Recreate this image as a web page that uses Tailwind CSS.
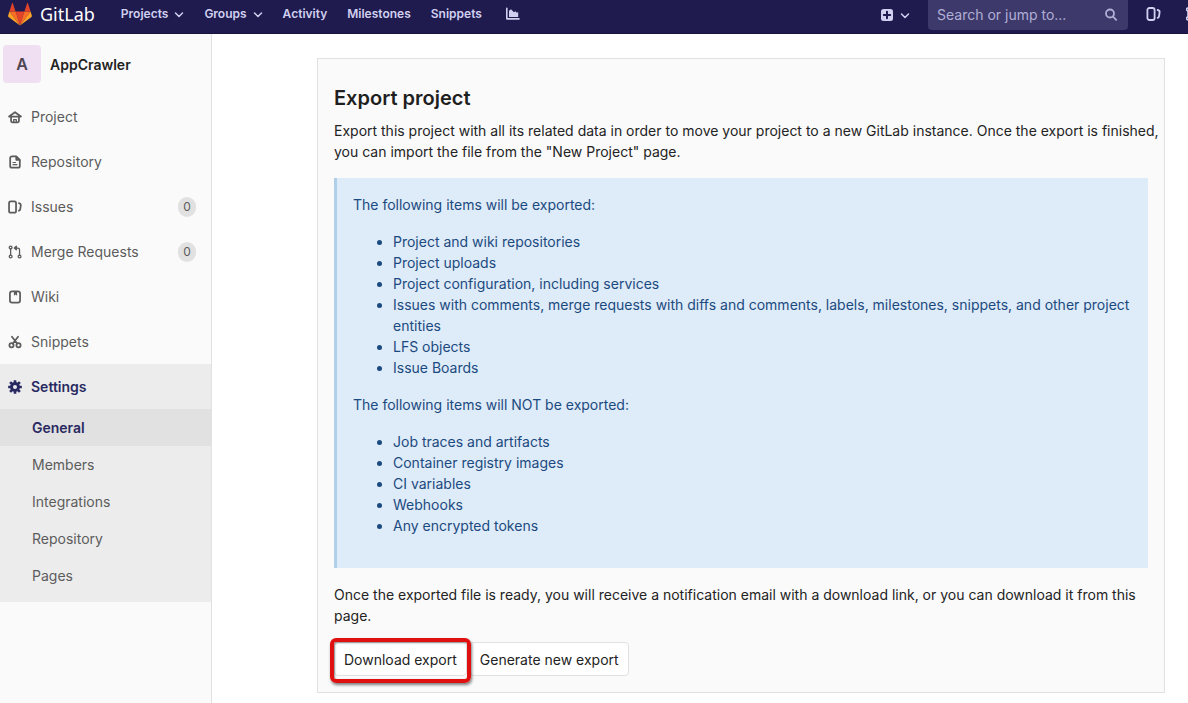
<!DOCTYPE html>
<html lang="en">
<head>
    <meta charset="UTF-8">
    <meta name="viewport" content="width=device-width, initial-scale=1.0">
    <title>General · Settings · AppCrawler · GitLab</title>
    <script src="https://cdn.jsdelivr.net/npm/@tailwindcss/browser@4"></script>
</head>
<body class="min-h-screen flex flex-col bg-white font-['Inter',sans-serif] text-sm leading-[21px] text-[#232323]">
    <header class="h-[34px] shrink-0 flex items-start justify-between overflow-hidden bg-[#1f1b4e] border-b border-[#17143d] text-[#d1d0f0] text-xs font-semibold">
        <nav class="h-7 pl-2 flex items-center gap-5">
            <a href="#" class="flex items-center gap-2 mr-1.5 text-white">
                <svg class="w-6 h-6" viewBox="0 0 24 24">
                    <path fill="#e24329" d="M12 23.5L16.4 9.6H7.6z"/>
                    <path fill="#fc6d26" d="M12 23.5L7.6 9.6H1.4zM12 23.5L16.4 9.6h6.2z"/>
                    <path fill="#fca326" d="M1.4 9.6L.1 13.8c-.1.4 0 .8.4 1.1L12 23.5zM22.6 9.6l1.3 4.2c.1.4 0 .8-.4 1.1L12 23.5z"/>
                    <path fill="#e24329" d="M1.4 9.6h6.2L4.9 1.4c-.1-.4-.7-.4-.9 0zM22.6 9.6h-6.2l2.7-8.2c.1-.4.7-.4.9 0z"/>
                </svg>
                <span class="font-['Noto_Sans',sans-serif] text-lg font-normal">GitLab</span>
            </a>
            <button type="button" class="flex items-center gap-1.5">Projects
                <svg class="w-[10px] h-[10px]" viewBox="0 0 10 10" fill="none" stroke="currentColor" stroke-width="1.5" stroke-linecap="round" stroke-linejoin="round"><path d="M1.5 4L5 7.5 8.5 4"/></svg>
            </button>
            <button type="button" class="flex items-center gap-1.5">Groups
                <svg class="w-[10px] h-[10px]" viewBox="0 0 10 10" fill="none" stroke="currentColor" stroke-width="1.5" stroke-linecap="round" stroke-linejoin="round"><path d="M1.5 4L5 7.5 8.5 4"/></svg>
            </button>
            <a href="#">Activity</a>
            <a href="#">Milestones</a>
            <a href="#">Snippets</a>
            <a href="#" aria-label="Analytics" class="ml-0.5">
                <svg class="w-4 h-4" viewBox="0 0 16 16" fill="currentColor"><path d="M2 2.2a.8.8 0 0 1 1.6 0v9.9h11.3a.8.8 0 0 1 0 1.7H3.2A1.2 1.2 0 0 1 2 12.6z"/><path d="M5 11V4.8l2-1.6 3 3 1.6-1L13 7l1.2-1.4V11z"/></svg>
            </a>
        </nav>
        <div class="flex items-start">
            <button type="button" aria-label="New" class="h-[30px] mr-[18px] flex items-center gap-1.5">
                <svg class="w-[14px] h-[14px]" viewBox="0 0 14 14"><rect x="1" y="1" width="12" height="12" rx="2.5" fill="currentColor"/><path d="M7 3.8v6.4M3.8 7h6.4" stroke="#1f1b4e" stroke-width="2" stroke-linecap="round"/></svg>
                <svg class="w-[10px] h-[10px]" viewBox="0 0 10 10" fill="none" stroke="currentColor" stroke-width="1.5" stroke-linecap="round" stroke-linejoin="round"><path d="M1.5 4L5 7.5 8.5 4"/></svg>
            </button>
            <label class="w-[200px] h-[30px] px-[9px] flex items-center rounded-b bg-[#3d396b]">
                <input type="text" aria-label="Search" placeholder="Search or jump to..." class="min-w-0 flex-1 text-sm font-normal outline-none placeholder:text-[#b1afd6]">
                <svg class="w-4 h-4" viewBox="0 0 16 16" fill="none" stroke="#b1afd6" stroke-width="1.8" stroke-linecap="round"><circle cx="7" cy="6.5" r="4"/><path d="M10 9.7l3.2 3.2"/></svg>
            </label>
            <a href="#" aria-label="Issues" class="h-7 ml-[18px] flex items-center">
                <svg class="w-4 h-4" viewBox="0 0 16 16" fill="none" stroke="currentColor" stroke-width="1.8" stroke-linecap="round"><rect x="1.4" y="2" width="7.2" height="12" rx="2"/><path d="M11.600 4c1.500.3 2.200 1 2 2.300l-.6 4c-.1.8-.6 1.300-1.400 1.500"/></svg>
            </a>
            <a href="#" aria-label="Merge requests" class="w-[2px] h-7 ml-6 flex items-center overflow-hidden">
                <svg class="w-4 h-4 shrink-0" viewBox="0 0 16 16" fill="none" stroke="currentColor" stroke-width="1.6"><circle cx="2" cy="3.5" r="1.4"/><circle cx="2" cy="12.5" r="1.4"/><path d="M2 5v6"/></svg>
            </a>
        </div>
    </header>

    <div class="flex-1 flex">
        <aside class="w-[212px] shrink-0 bg-[#fafafa] border-r border-[#e1e1e1] text-[#5c5c5c]">
            <a href="#" class="h-[60px] pl-[3px] flex items-center gap-[9px] text-[#232323] font-semibold">
                <span class="w-[38px] h-[38px] flex items-center justify-center rounded-sm bg-[#f0def2] text-base text-[#4f4654]">A</span>
                AppCrawler
            </a>
            <ul>
                <li>
                    <a href="#" class="h-[45px] pl-2 pr-[15px] flex items-center gap-[9px]">
                        <svg class="w-[14px] h-[14px]" viewBox="0 0 16 16" fill="none" stroke="currentColor" stroke-width="2" stroke-linecap="round" stroke-linejoin="round"><path d="M1.200 7.500L8 2.500l6.800 5zM3.500 8v4.500a1.500 1.500 0 0 0 1.500 1.500h6a1.500 1.500 0 0 0 1.500-1.500V8"/><path stroke-width="1.500" d="M6.500 13.500v-2.500h3v2.500"/></svg>
                        Project
                    </a>
                </li>
                <li>
                    <a href="#" class="h-[45px] pl-2 pr-[15px] flex items-center gap-[9px]">
                        <svg class="w-[14px] h-[14px]" viewBox="0 0 16 16" fill="none" stroke="currentColor" stroke-width="2" stroke-linecap="round" stroke-linejoin="round"><path d="M9.500 1.500H4.500a2 2 0 0 0-2 2v9a2 2 0 0 0 2 2h7a2 2 0 0 0 2-2V5.500z"/><path fill="currentColor" stroke-width="1" d="M9 1.500V6h4.500z"/><path stroke-width="1.200" d="M5.700 8.500h3M5.700 11h4.600"/></svg>
                        Repository
                    </a>
                </li>
                <li>
                    <a href="#" class="h-[45px] pl-2 pr-[15px] flex items-center gap-[9px]">
                        <svg class="w-[14px] h-[14px]" viewBox="0 0 16 16" fill="none" stroke="currentColor" stroke-width="2" stroke-linecap="round"><rect x="1.200" y="1.500" width="8" height="13" rx="2"/><path d="M12.500 3.500c1.500.300 2.300 1.200 2.100 2.600l-.6 4.300c-.1.900-.6 1.500-1.500 1.800"/></svg>
                        Issues
                        <span class="w-[18px] h-5 ml-auto flex items-center justify-center rounded-full bg-[#e1e1e1] text-xs">0</span>
                    </a>
                </li>
                <li>
                    <a href="#" class="h-[45px] pl-2 pr-[15px] flex items-center gap-[9px]">
                        <svg class="w-[14px] h-[14px]" viewBox="0 0 16 16" fill="none" stroke="currentColor" stroke-width="1.500" stroke-linecap="round" stroke-linejoin="round"><circle cx="3" cy="2.800" r="1.600"/><circle cx="3" cy="13.200" r="1.600"/><circle cx="13.200" cy="13.200" r="1.600"/><path d="M3 4.500v7M13.200 11.500V5.500a2 2 0 0 0-2-2H8"/><path fill="currentColor" d="M9.500 1.500v4L7.300 3.500z"/></svg>
                        Merge Requests
                        <span class="w-[18px] h-5 ml-auto flex items-center justify-center rounded-full bg-[#e1e1e1] text-xs">0</span>
                    </a>
                </li>
                <li>
                    <a href="#" class="h-[45px] pl-2 pr-[15px] flex items-center gap-[9px]">
                        <svg class="w-[14px] h-[14px]" viewBox="0 0 16 16" fill="none" stroke="currentColor" stroke-width="2"><rect x="2.200" y="1.500" width="11.600" height="13" rx="2.500"/><path fill="currentColor" stroke="none" d="M6.800 2h3.600v4.500l-1.800-1.300-1.800 1.300z"/></svg>
                        Wiki
                    </a>
                </li>
                <li>
                    <a href="#" class="h-[45px] pl-2 pr-[15px] flex items-center gap-[9px]">
                        <svg class="w-[14px] h-[14px]" viewBox="0 0 16 16" fill="none" stroke="currentColor" stroke-width="2" stroke-linecap="round"><circle cx="4" cy="11.600" r="2.400"/><circle cx="12" cy="11.600" r="2.400"/><path d="M4.500 2l6 7.800M11.500 2L5.500 9.800"/></svg>
                        Snippets
                    </a>
                </li>
                <li class="pb-2 bg-[#ececec]">
                    <a href="#" class="h-[45px] pl-2 pr-[15px] flex items-center gap-[9px] font-semibold text-[#292961]">
                        <svg class="w-[14px] h-[14px]" viewBox="0 0 16 16" fill="none" stroke="currentColor"><circle cx="8" cy="8" r="4" stroke-width="3.400"/><path stroke-width="3" d="M8 .2v3M8 12.800v3M.2 8h3M12.800 8h3M2.400 2.400l2.100 2.100M11.500 11.500l2.100 2.100M2.400 13.600l2.100-2.100M11.500 4.500l2.100-2.100"/></svg>
                        Settings
                    </a>
                    <ul>
                        <li><a href="#" class="h-[37px] pl-8 flex items-center bg-[#e1e1e1] font-semibold text-[#292961]">General</a></li>
                        <li><a href="#" class="h-[37px] pl-8 flex items-center">Members</a></li>
                        <li><a href="#" class="h-[37px] pl-8 flex items-center">Integrations</a></li>
                        <li><a href="#" class="h-[37px] pl-8 flex items-center">Repository</a></li>
                        <li><a href="#" class="h-[37px] pl-8 flex items-center">Pages</a></li>
                    </ul>
                </li>
            </ul>
        </aside>

        <main class="flex-1 min-w-0 pt-6 pb-[10px] pl-[105px] pr-[23px]">
            <section class="px-4 pt-[25px] pb-4 bg-[#fafafa] border border-[#e1e1e1]">
                <h4 class="mb-2 text-xl leading-7 font-semibold text-[#1f1f1f]">Export project</h4>
                <p class="mb-4 -mr-3">Export this project with all its related data in order to move your project to a new GitLab instance. Once the export is finished, you can import the file from the "New Project" page.</p>
                <div class="mb-4 p-4 border-l-[3px] border-[#b0cfe9] bg-[#deebf8] text-[#1b4a80]">
                    <p class="mb-4">The following items will be exported:</p>
                    <ul class="mb-4 pl-10 list-disc">
                        <li>Project and wiki repositories</li>
                        <li>Project uploads</li>
                        <li>Project configuration, including services</li>
                        <li>Issues with comments, merge requests with diffs and comments, labels, milestones, snippets, and other project entities</li>
                        <li>LFS objects</li>
                        <li>Issue Boards</li>
                    </ul>
                    <p class="mb-4">The following items will NOT be exported:</p>
                    <ul class="mb-4 pl-10 list-disc">
                        <li>Job traces and artifacts</li>
                        <li>Container registry images</li>
                        <li>CI variables</li>
                        <li>Webhooks</li>
                        <li>Any encrypted tokens</li>
                    </ul>
                </div>
                <p class="mb-4 -mr-3">Once the exported file is ready, you will receive a notification email with a download link, or you can download it from this page.</p>
                <div class="flex gap-[3px]">
                    <div class="relative">
                        <button type="button" class="h-[34px] px-[9px] rounded-sm border border-[#e1e1e1] bg-white">Download export</button>
                        <span class="absolute -inset-x-1 -top-1 -bottom-[7px] rounded-md border-4 border-[#e01010] shadow-[1px_2px_3px_rgba(0,0,0,0.5),inset_1px_1px_2px_rgba(0,0,0,0.4)] pointer-events-none"></span>
                    </div>
                    <button type="button" class="h-[34px] px-[9px] rounded border border-[#e1e1e1] bg-white">Generate new export</button>
                </div>
            </section>
        </main>
    </div>
</body>
</html>
